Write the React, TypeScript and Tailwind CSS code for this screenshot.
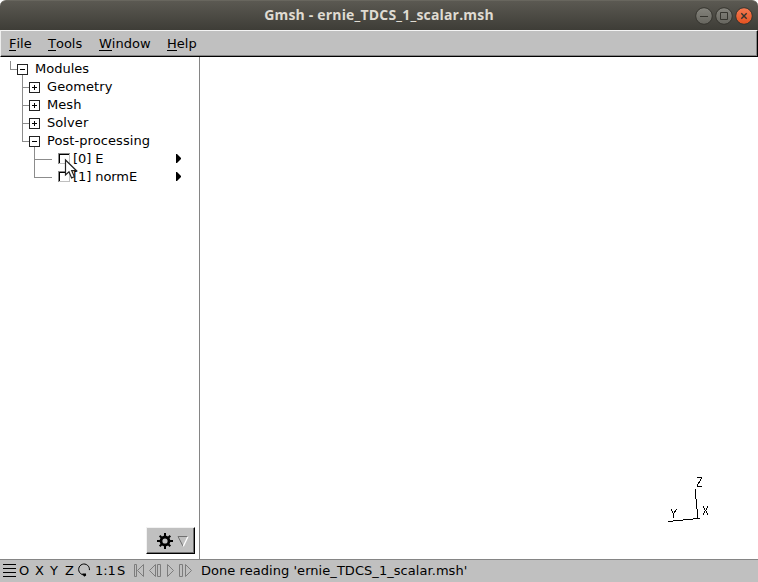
import React from "react";

type Item = { label: string; depth: 0 | 1 | 2; open?: boolean; last?: boolean };

const items: Item[] = [
  { label: "Modules", depth: 0, open: true },
  { label: "Geometry", depth: 1 },
  { label: "Mesh", depth: 1 },
  { label: "Solver", depth: 1 },
  { label: "Post-processing", depth: 1, open: true, last: true },
  { label: "[0] E", depth: 2 },
  { label: "[1] normE", depth: 2, last: true },
];

const labelTracking = ["", "tracking-[0.08px]", "tracking-[-0.08px]"];

function Toggle({ x, open }: { x: number; open?: boolean }) {
  return (
    <g stroke="#000">
      <rect x={x + 0.5} y="4.5" width="10" height="10" fill="#fff" stroke="#222" />
      <path d={`M${x + 3} 9.5h5`} />
      {!open && <path d={`M${x + 5.5} 7v5`} />}
    </g>
  );
}

function Guides({ item }: { item: Item }) {
  const { depth, open, last } = item;
  const width = [35, 47, 73][depth];
  return (
    <svg width={width} height="18" className="shrink-0" fill="none" stroke="#8c8c8c" shapeRendering="crispEdges">
      {depth === 0 && <path d="M10.5 1v8.5H17M22.5 15v3" />}
      {depth === 1 && <path d={`M22.5 0v${last ? 9.5 : 18}M22.5 9.5H29${open ? "M34.5 15v3" : ""}`} />}
      {depth === 2 && <path d={`M34.5 0v${last ? 9.5 : 18}M34.5 9.5H52`} />}
      {depth < 2 ? (
        <Toggle x={depth === 0 ? 17 : 29} open={open} />
      ) : (
        <g>
          <rect x="58" y="3" width="12" height="11" fill="#fff" stroke="none" />
          <path d="M58.5 14V3.5H70" stroke="#8c8c8c" />
          <path d="M59.5 14V4.5H69" stroke="#000" />
          <path d="M69.5 4v9.5H59" stroke="#bfbfbf" />
        </g>
      )}
    </svg>
  );
}

function Tree() {
  return (
    <div className="flex flex-col pt-[3px]">
      {items.map((item) => (
        <div key={item.label} className="flex h-[18px] items-center whitespace-pre">
          <Guides item={item} />
          <span className={`leading-[18px] ${labelTracking[item.depth]}`}>{item.label}</span>
          {item.depth === 2 && (
            <svg width="6" height="10" className="mr-[18px] ml-auto">
              <path d="M1 0h1l4 4v1l-4 4H1z" />
            </svg>
          )}
        </div>
      ))}
    </div>
  );
}

function WindowButtons() {
  return (
    <svg width="60" height="20" viewBox="694 5 60 20" fill="none">
      <defs>
        <linearGradient id="grey" x2="0" y2="1">
          <stop stopColor="#85847d" />
          <stop offset="1" stopColor="#66655e" />
        </linearGradient>
        <linearGradient id="orange" x2="0" y2="1">
          <stop stopColor="#f57b53" />
          <stop offset="1" stopColor="#e4511f" />
        </linearGradient>
      </defs>
      <g stroke="#35342e">
        <circle cx="704" cy="15" r="8.3" fill="url(#grey)" />
        <circle cx="724" cy="15" r="8.3" fill="url(#grey)" />
        <circle cx="744" cy="15" r="8.3" fill="url(#orange)" />
        <path d="M700 15.5h8M720.5 11.5h7v7h-7z" />
        <path d="m741.3 12.3 5.4 5.4m0-5.4-5.4 5.4" strokeWidth="1.4" />
      </g>
    </svg>
  );
}

function Playback() {
  return (
    <svg width="60" height="22" viewBox="133 560 60 22" fill="none" stroke="#7c7c7c">
      <path d="M134.5 564.5h2v12h-2zM143.5 564.5v12l-6-6zM155.5 564.5v12l-6-6zM157.5 564.5h3v12h-3zM167.5 564.5v12l6-6zM179.5 564.5h3v12h-3zM185.5 564.5v12l6-6z" />
    </svg>
  );
}

function Cursor() {
  return (
    <svg className="absolute top-[158px] left-[63px]" width="16" height="22">
      <path d="M2.5 2v15l3.5-3.2 2.6 6.1 2.8-1.2-2.7-6h4.8z" fill="#fff" stroke="#222" strokeWidth="1.2" />
    </svg>
  );
}

export default function App() {
  return (
    <div className="relative flex h-[582px] w-[758px] flex-col overflow-hidden bg-white font-['DejaVu_Sans',sans-serif] text-[13px] text-black">
      <header className="grid h-[30px] shrink-0 grid-cols-[1fr_auto_1fr] items-center rounded-t-[6px] border-t border-[#68665e] bg-linear-to-b from-[#5b5952] to-[#3e3d37] pr-1">
        <span />
        <h1 className="pb-[2px] pl-[4px] font-['Open_Sans',sans-serif] text-[14px] leading-[26px] font-bold tracking-[0.18px] whitespace-nowrap text-[#dfdbd2]">
          Gmsh - ernie_TDCS_1_scalar.msh
        </h1>
        <div className="flex justify-end">
          <WindowButtons />
        </div>
      </header>
      <nav className="flex h-[27px] shrink-0 items-start border-t border-r border-b border-l border-t-[#f4f4f4] border-r-black border-b-black border-l-[#eee] bg-[#c0c0c0] pt-[4px] pl-[8px] leading-[18px] shadow-[inset_-1px_-1px_0_#858585]">
        {[
          ["File", "w-[39px]"],
          ["Tools", "w-[51px]"],
          ["Window", "w-[68px]"],
          ["Help", "w-[40px]"],
        ].map(([label, width]) => (
          <span key={label} className={width}>
            <span className="inline-block h-[16px] border-b border-black leading-[18px]">{label[0]}</span>
            {label.slice(1)}
          </span>
        ))}
      </nav>
      <main className="flex h-[502px] shrink-0">
        <aside className="flex w-[200px] flex-col justify-between border-r border-[#858585]">
          <Tree />
          <button className="mb-[5px] ml-[146px] flex h-[27px] w-[49px] items-center border-t border-r border-b border-l border-t-[#f2f2f2] border-r-black border-b-black border-l-[#f2f2f2] bg-[#c0c0c0] shadow-[inset_-1px_-1px_0_#707070]">
            <svg width="46" height="24" viewBox="147 528 46 24" fill="none">
              <g stroke="#000">
                <circle cx="165" cy="540" r="4" strokeWidth="2.8" />
                <path
                  d="M165 532v3m0 10v3m-8-8h3m10 0h3m-13.3-5.3 2 2m6.6 6.6 2 2m0-10.6-2 2m-6.6 6.6-2 2"
                  strokeWidth="2"
                />
              </g>
              <path d="m178 535.5 5.2 10" stroke="#707070" />
              <path d="M178 535.5h10" stroke="#707070" />
              <path d="m183.2 545.5 4.8-10" stroke="#fff" strokeWidth="1.3" />
            </svg>
          </button>
        </aside>
        <section className="flex flex-1 items-end justify-end pr-[45px] pb-[33px]">
          <svg width="48" height="52" viewBox="665 474 48 52" fill="none" stroke="#000" shapeRendering="crispEdges">
            <path d="M668 521.5 698 518.5 695 489M697 518.5h3" />
            <path d="M697 477.5h4.5v1l-4.5 7v1h5M671.5 509v1l2 3.5v4m0-4 2.5-3.5v-1M703.5 506v1.5l4 6v1.5m0-9v1.5l-4 6v1.5" />
          </svg>
        </section>
      </main>
      <footer className="flex h-[23px] shrink-0 items-start border-t border-[#858585] bg-[#c0c0c0] leading-[22px] whitespace-nowrap">
        <svg width="18" height="22" viewBox="0 560 18 22" stroke="#000" shapeRendering="crispEdges">
          <path d="M3 564.5h13m-13 4h13m-13 4h13m-13 4h13" />
        </svg>
        <span className="w-[17px] pl-px">O</span>
        <span className="w-[15px]">X</span>
        <span className="w-[14px]">Y</span>
        <span className="w-[12px] pl-px">Z</span>
        <svg width="18" height="22" viewBox="76 560 18 22" fill="none" stroke="#000">
          <path d="M80.3 573.3a5.4 5.4 0 1 1 9.1-3.2" />
          <path d="M80.3 573.3q1.5 1.6 3.8 1.7h2" />
          <path d="M82.2 573.6h3.8v1.8l-1.8 1.3z" fill="#000" stroke="none" />
        </svg>
        <span className="w-[22px] pl-px tracking-[-0.1px]">1:1</span>
        <span className="w-[17px] pl-px">S</span>
        <Playback />
        <span className="pl-[8px] tracking-[0.05px]">Done reading 'ernie_TDCS_1_scalar.msh'</span>
      </footer>
      <Cursor />
    </div>
  );
}
